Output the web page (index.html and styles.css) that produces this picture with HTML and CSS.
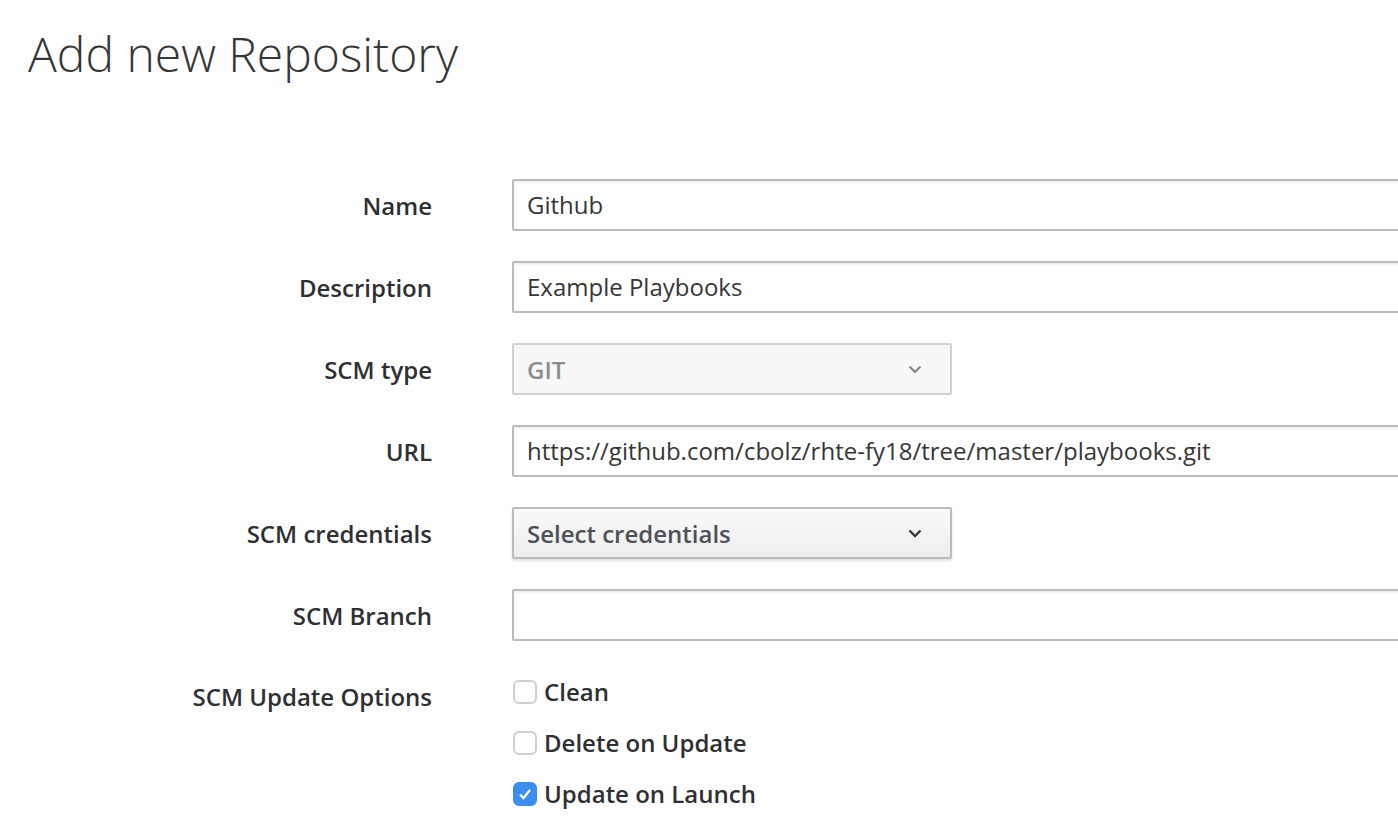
FILE: index.html
```html
<!DOCTYPE html>
<html>
<head>
<meta charset="utf-8">
<link rel="stylesheet" href="styles.css">
</head>
<body>
<div class="page">
  <h1 class="title">Add new Repository</h1>
  <form class="form">
    <div class="row">
      <label class="label">Name</label>
      <div class="field"><div class="input">Github</div></div>
    </div>
    <div class="row">
      <label class="label">Description</label>
      <div class="field"><div class="input">Example Playbooks</div></div>
    </div>
    <div class="row">
      <label class="label">SCM type</label>
      <div class="field"><div class="select disabled"><span>GIT</span><svg class="chev" width="14" height="9" viewBox="0 0 14 9"><path d="M1.5 1.5 L7 7 L12.5 1.5" fill="none" stroke="currentColor" stroke-width="2.2"/></svg></div></div>
    </div>
    <div class="row">
      <label class="label">URL</label>
      <div class="field"><div class="input">https://github.com/cbolz/rhte-fy18/tree/master/playbooks.git</div></div>
    </div>
    <div class="row">
      <label class="label">SCM credentials</label>
      <div class="field"><div class="select button"><span>Select credentials</span><svg class="chev" width="14" height="9" viewBox="0 0 14 9"><path d="M1.5 1.5 L7 7 L12.5 1.5" fill="none" stroke="currentColor" stroke-width="2.4"/></svg></div></div>
    </div>
    <div class="row">
      <label class="label">SCM Branch</label>
      <div class="field"><div class="input"></div></div>
    </div>
    <div class="row options">
      <label class="label">SCM Update Options</label>
      <div class="checks">
        <div class="check"><span class="box"></span><span>Clean</span></div>
        <div class="check"><span class="box"></span><span>Delete on Update</span></div>
        <div class="check"><span class="box on"><svg width="16" height="14" viewBox="0 0 16 14"><path d="M3 7.5 L6.5 11 L13 3" fill="none" stroke="#fff" stroke-width="2.2"/></svg></span><span>Update on Launch</span></div>
      </div>
    </div>
  </form>
</div>
</body>
</html>
```
FILE: styles.css
```css
html, body {
  margin: 0;
  padding: 0;
  background: #fff;
  overflow: hidden;
}
body {
  font-family: "Open Sans", "Liberation Sans", sans-serif;
  color: #363636;
  width: 1398px;
  height: 832px;
}
.page {
  padding: 0 0 0 28px;
}
.title {
  margin: 0;
  padding-top: 22px;
  font-weight: 300;
  font-size: 48px;
  line-height: 64px;
  color: #363636;
  letter-spacing: 0;
}
.form {
  margin-top: 93px;
  display: flex;
  flex-direction: column;
  gap: 30px;
}
.row {
  display: flex;
  align-items: center;
}
.label {
  width: 404px;
  flex: none;
  text-align: right;
  font-weight: 600;
  font-size: 24px;
  color: #2f3033;
  padding-right: 80px;
  box-sizing: content-box;
}
.field {
  flex: none;
  width: 1000px;
}
.input {
  box-sizing: border-box;
  height: 52px;
  border: 2px solid #bbbbbb;
  border-radius: 2px;
  box-shadow: inset 0 2px 2px rgba(0,0,0,0.06);
  padding: 0 13px;
  font-size: 24px;
  line-height: 48px;
  color: #363636;
  background: #fff;
  white-space: nowrap;
}
.select {
  box-sizing: border-box;
  width: 440px;
  height: 52px;
  border: 2px solid #bbbbbb;
  border-radius: 2px;
  padding: 0 28px 0 13px;
  display: flex;
  align-items: center;
  justify-content: space-between;
  font-size: 24px;
  font-weight: 600;
}
.select.disabled {
  background: #f8f8f8;
  color: #8b8d8f;
  border-color: #d1d1d1;
}
.select.disabled .chev {
  color: #7f8a94;
}
.select.button {
  background: linear-gradient(#fafafa, #ededed);
  color: #4d5258;
  box-shadow: 0 2px 3px rgba(0,0,0,0.12);
}
.select.button .chev {
  color: #363636;
}
.options {
  align-items: flex-start;
  margin-top: 4px;
}
.options .label {
  padding-top: 5px;
}
.checks {
  display: flex;
  flex-direction: column;
  gap: 18px;
}
.check {
  display: flex;
  align-items: center;
  gap: 7px;
  font-size: 24px;
  font-weight: 600;
  height: 33px;
  margin-left: 1px;
  color: #2f3033;
}
.box {
  box-sizing: border-box;
  width: 24px;
  height: 24px;
  border: 2px solid #cfcfcf;
  border-radius: 6px;
  background: #fff;
  display: flex;
  align-items: center;
  justify-content: center;
}
.box.on {
  background: #3b8ef0;
  border-color: #3b8ef0;
}
```
